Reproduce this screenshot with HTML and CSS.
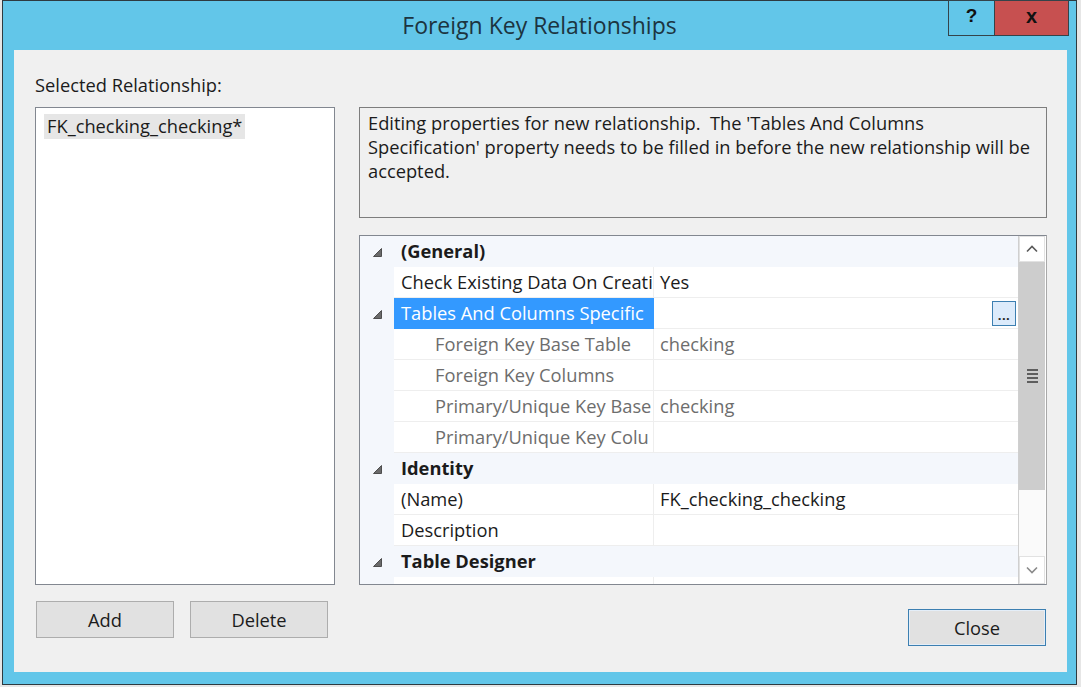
FILE: index.html
```html
<!DOCTYPE html>
<html>
<head>
<meta charset="utf-8">
<link rel="stylesheet" href="styles.css">
</head>
<body>
<div class="window">
  <div class="titlebar">
    <div class="title">Foreign Key Relationships</div>
    <div class="caption-btns">
      <div class="cbtn help">?</div>
      <div class="cbtn close">x</div>
    </div>
  </div>
  <div class="client">
    <div class="left">
      <div class="label">Selected Relationship:</div>
      <div class="list">
        <div class="item">FK_checking_checking*</div>
      </div>
      <div class="btnrow">
        <div class="btn">Add</div>
        <div class="btn">Delete</div>
      </div>
    </div>
    <div class="right">
      <div class="desc">Editing properties for new relationship.&nbsp; The 'Tables And Columns<br>Specification' property needs to be filled in before the new relationship will be<br>accepted.</div>
      <div class="grid">
        <div class="rows">
          <div class="row cat">
            <div class="gut"><svg class="tri" width="9" height="9" viewBox="0 0 9 9"><polygon points="8.5,0.5 8.5,8.5 0.5,8.5" /></svg></div>
            <div class="catname">(General)</div>
          </div>
          <div class="row prop">
            <div class="gut"></div>
            <div class="name">Check Existing Data On Creati</div>
            <div class="val">Yes</div>
          </div>
          <div class="row prop">
            <div class="gut"><svg class="tri" width="9" height="9" viewBox="0 0 9 9"><polygon points="8.5,0.5 8.5,8.5 0.5,8.5" /></svg></div>
            <div class="name sel">Tables And Columns Specific</div>
            <div class="val"><div class="ell">...</div></div>
          </div>
          <div class="row prop sub">
            <div class="gut"></div>
            <div class="name">Foreign Key Base Table</div>
            <div class="val">checking</div>
          </div>
          <div class="row prop sub">
            <div class="gut"></div>
            <div class="name">Foreign Key Columns</div>
            <div class="val"></div>
          </div>
          <div class="row prop sub">
            <div class="gut"></div>
            <div class="name">Primary/Unique Key Base</div>
            <div class="val">checking</div>
          </div>
          <div class="row prop sub">
            <div class="gut"></div>
            <div class="name">Primary/Unique Key Colu</div>
            <div class="val"></div>
          </div>
          <div class="row cat">
            <div class="gut"><svg class="tri" width="9" height="9" viewBox="0 0 9 9"><polygon points="8.5,0.5 8.5,8.5 0.5,8.5" /></svg></div>
            <div class="catname">Identity</div>
          </div>
          <div class="row prop">
            <div class="gut"></div>
            <div class="name">(Name)</div>
            <div class="val">FK_checking_checking</div>
          </div>
          <div class="row prop">
            <div class="gut"></div>
            <div class="name">Description</div>
            <div class="val"></div>
          </div>
          <div class="row cat">
            <div class="gut"><svg class="tri" width="9" height="9" viewBox="0 0 9 9"><polygon points="8.5,0.5 8.5,8.5 0.5,8.5" /></svg></div>
            <div class="catname">Table Designer</div>
          </div>
          <div class="row prop">
            <div class="gut"></div>
            <div class="name"></div>
            <div class="val"></div>
          </div>
        </div>
        <div class="scroll">
          <div class="sbtn up"><svg width="12" height="8" viewBox="0 0 12 8"><polyline points="1,6.5 6,1.5 11,6.5" /></svg></div>
          <div class="thumb"><div class="grip"><i></i><i></i><i></i><i></i></div></div>
          <div class="track"></div>
          <div class="sbtn down"><svg width="12" height="8" viewBox="0 0 12 8"><polyline points="1,1.5 6,6.5 11,1.5" /></svg></div>
        </div>
      </div>
      <div class="closerow">
        <div class="btn default">Close</div>
      </div>
    </div>
  </div>
</div>
</body>
</html>
```

FILE: styles.css
```css
html, body {
  margin: 0;
  padding: 0;
}
body {
  width: 1081px;
  height: 687px;
  overflow: hidden;
  background: #e6e6e6;
  font-family: "Open Sans", "Noto Sans", "Liberation Sans", sans-serif;
  color: #1b1b1b;
}
.window {
  margin-left: 2px;
  width: 1075px;
  height: 685px;
  box-sizing: border-box;
  border: 1px solid #2e3a40;
  background: #62c6e9;
  display: flex;
  flex-direction: column;
  position: relative;
}
.titlebar {
  height: 49px;
  flex: none;
  display: flex;
  align-items: center;
  justify-content: center;
}
.title {
  font-size: 23px;
  color: #1c3440;
  margin-top: -2px;
}
.caption-btns {
  position: absolute;
  top: -1px;
  right: 7px;
  display: flex;
}
.cbtn {
  height: 36px;
  box-sizing: border-box;
  border: 1px solid #34434a;
  display: flex;
  align-items: center;
  justify-content: center;
  font-family: "Liberation Sans", Arial, sans-serif;
  font-weight: bold;
  font-size: 19px;
  color: #111;
  padding-bottom: 4px;
}
.help {
  width: 46px;
  background: #62c6e9;
  border-right: none;
}
.close {
  width: 75px;
  background: #c75050;
  font-size: 20px;
}
.client {
  flex: 1;
  margin: 0 9px 12px 11px;
  background: #f0f0f0;
  display: flex;
  padding-left: 21px;
  gap: 24px;
  font-size: 18.3px;
}
.left {
  width: 300px;
  display: flex;
  flex-direction: column;
  padding-top: 24px;
}
.label {
  height: 22px;
  line-height: 22px;
}
.list {
  margin-top: 11px;
  height: 478px;
  box-sizing: border-box;
  border: 1px solid #828790;
  background: #fff;
  padding: 5px 0 0 8px;
}
.item {
  display: inline-block;
  height: 25px;
  line-height: 24px;
  padding: 0 3px;
  background: #e6e6e6;
}
.btnrow {
  margin-top: 16px;
  margin-left: 1px;
  display: flex;
  gap: 16px;
}
.btn {
  width: 138px;
  height: 37px;
  box-sizing: border-box;
  border: 1px solid #adadad;
  background: #e1e1e1;
  display: flex;
  align-items: center;
  justify-content: center;
  color: #1b1b1b;
}
.right {
  width: 688px;
  display: flex;
  flex-direction: column;
  padding-top: 57px;
}
.desc {
  height: 111px;
  box-sizing: border-box;
  border: 1px solid #7d7d7d;
  background: #f0f0f0;
  padding: 3px 8px 0;
  line-height: 24px;
  white-space: nowrap;
}
.grid {
  margin-top: 17px;
  height: 350px;
  box-sizing: border-box;
  border: 1px solid #828790;
  border-right-color: #a9a9a9;
  background: #fff;
  display: flex;
  overflow: hidden;
}
.rows {
  width: 658px;
  flex: none;
  overflow: hidden;
}
.row {
  height: 31px;
  box-sizing: border-box;
  display: flex;
}
.gut {
  width: 34px;
  flex: none;
  background: #f4f7fc;
  display: flex;
  align-items: center;
  padding-left: 13px;
  box-sizing: border-box;
}
.tri polygon {
  fill: #6a6a6a;
  stroke: #4e4e4e;
  stroke-width: 1;
  stroke-linejoin: round;
}
.tri {
  margin-top: 2px;
}
.cat {
  background: #f4f7fc;
}
.catname {
  padding-left: 7px;
  font-weight: bold;
  line-height: 30px;
}
.prop .name {
  width: 260px;
  flex: none;
  box-sizing: border-box;
  padding-left: 7px;
  line-height: 30px;
  border-right: 1px solid #eeeeee;
  border-bottom: 1px solid #eeeeee;
  white-space: nowrap;
  overflow: hidden;
}
.prop .val {
  flex: 1;
  padding-left: 6px;
  line-height: 30px;
  border-bottom: 1px solid #eeeeee;
  position: relative;
  white-space: nowrap;
}
.sub .name {
  padding-left: 41px;
  color: #6d6d6d;
}
.sub .val {
  color: #6d6d6d;
}
.prop .name.sel {
  background: #3399ff;
  color: #fff;
  border-right-color: #3399ff;
  border-bottom-color: #3399ff;
}
.ell {
  position: absolute;
  right: 2px;
  top: 3px;
  width: 24px;
  height: 25px;
  box-sizing: border-box;
  border: 1px solid #3c7fb1;
  background: #dcebfb;
  font-size: 13px;
  font-weight: bold;
  line-height: 26px;
  text-align: center;
  color: #222;
  letter-spacing: 0.5px;
}
.scroll {
  flex: none;
  width: 27px;
  box-sizing: border-box;
  border-left: 1px solid #cfcfcf;
  background: #fbfbfb;
  display: flex;
  flex-direction: column;
}
.sbtn {
  flex: none;
  background: #fff;
  display: flex;
  align-items: center;
  justify-content: center;
  border: 1px solid #e2e2e2;
}
.sbtn.up {
  height: 26px;
  box-sizing: border-box;
}
.sbtn.down {
  height: 28px;
  box-sizing: border-box;
}
.sbtn polyline {
  fill: none;
  stroke-width: 1.6;
}
.up polyline {
  stroke: #5a5a5a;
}
.down polyline {
  stroke: #8a8a8a;
}
.thumb {
  flex: none;
  height: 228px;
  background: #cdcdcd;
  display: flex;
  align-items: center;
  justify-content: center;
}
.grip {
  display: flex;
  flex-direction: column;
  gap: 2px;
}
.grip i {
  display: block;
  width: 11px;
  height: 2px;
  background: #5e5e5e;
}
.track {
  flex: 1;
  background: #fafafa;
}
.closerow {
  margin-top: 24px;
  display: flex;
  justify-content: flex-end;
  padding-right: 1px;
}
.btn.default {
  border: 1px solid #3c7fb1;
  box-shadow: inset 0 0 0 1px #e4eef8;
}
```
